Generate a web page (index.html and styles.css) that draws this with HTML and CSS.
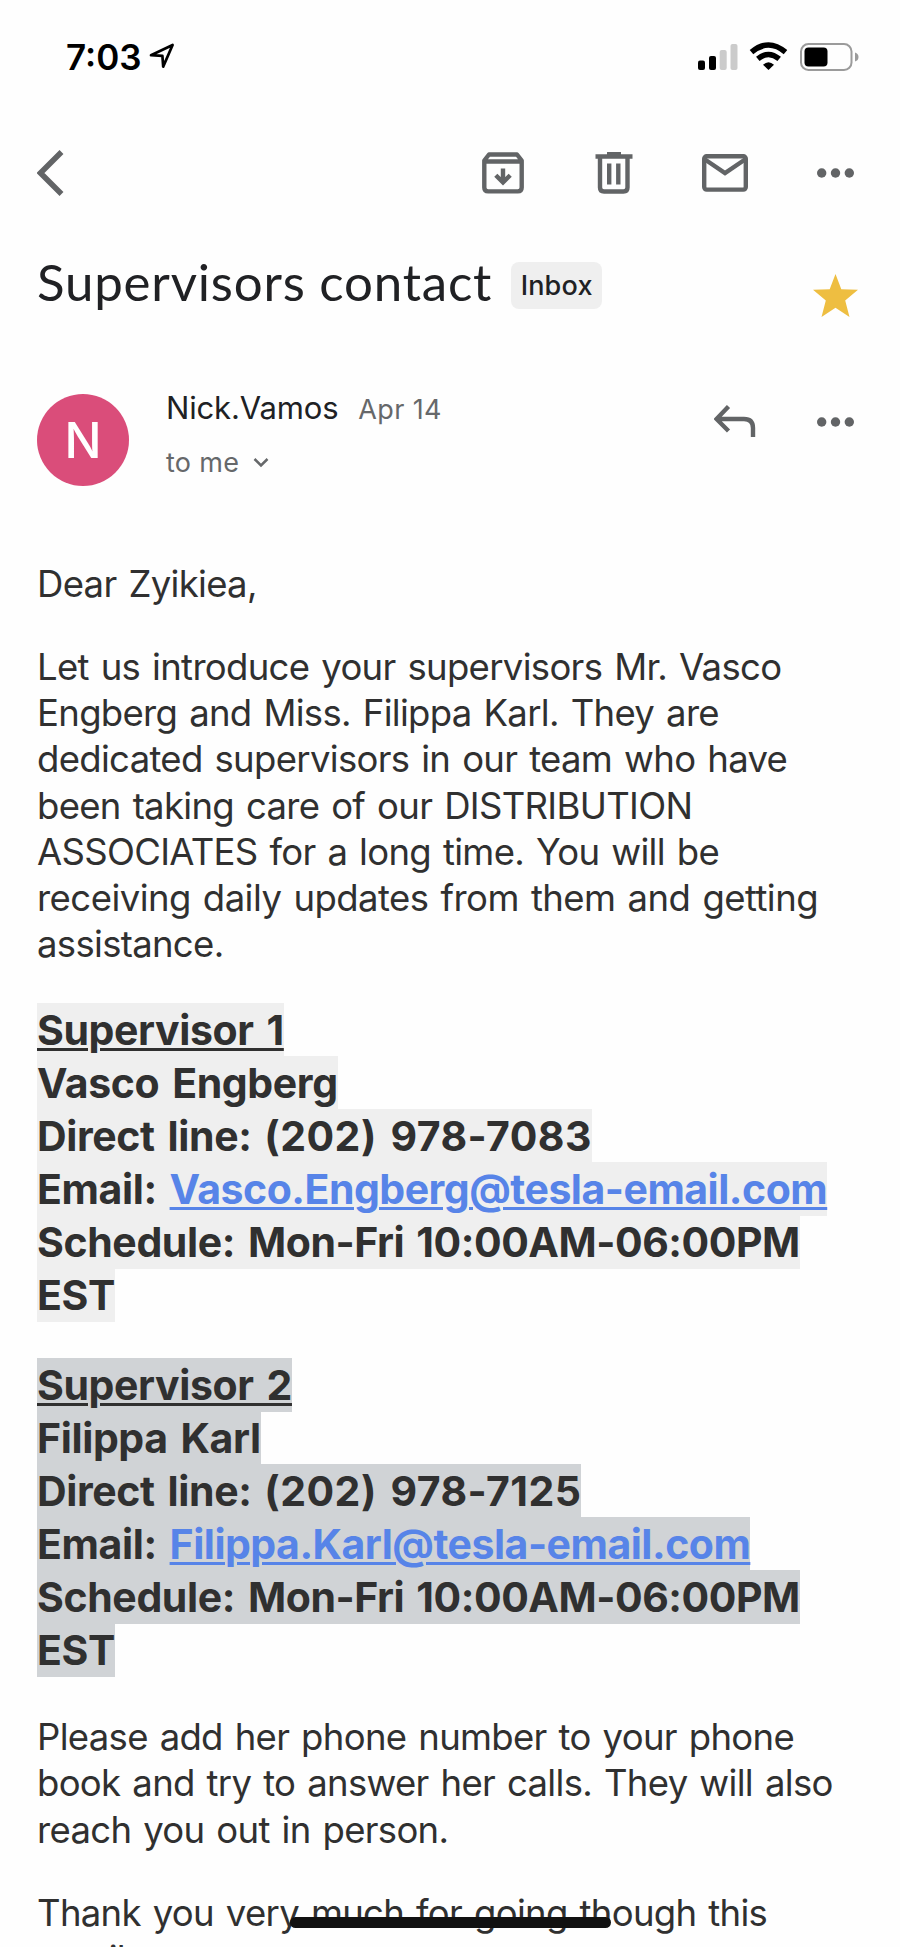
FILE: index.html
```html
<!DOCTYPE html>
<html lang="en">
<head>
<meta charset="utf-8">
<title>Supervisors contact</title>
<link rel="stylesheet" href="styles.css">
</head>
<body>
<main class="screen">
  <header class="status">
    <span class="clock">7:03</span>
    <svg class="location" width="26" height="26" viewBox="0 0 26 26"><path d="M2 12.2 23.6 2 14.2 23.6 13.4 12.8Z" fill="none" stroke="#000" stroke-width="2.7" stroke-linejoin="round"/></svg>
    <svg class="indicators" width="164" height="32" viewBox="0 0 164 32">
      <rect x="1" y="20.500" width="7" height="9.500" rx="2"/><rect x="12" y="16" width="7" height="14" rx="2"/>
      <rect x="22.700" y="10" width="7" height="20" rx="2" fill="#cbcbcb"/><rect x="33.500" y="4" width="7" height="26" rx="2" fill="#cbcbcb"/>
      <g fill="none" stroke="#000" stroke-width="5.500"><path d="M54.500 12.200Q71.500 -2.200 88.500 12.200"/><path d="M60.800 18.900Q71.500 10.100 82.200 18.900"/></g>
      <path d="M66 24.800Q71.500 19.600 77 24.800L71.500 30Z"/>
      <rect x="104" y="4" width="50.500" height="26" rx="7.500" fill="none" stroke="#9b9b9b" stroke-width="2"/>
      <rect x="107.500" y="7.500" width="23" height="19" rx="4"/>
      <path d="M158 12.500Q161.500 13.500 161.500 17T158 21.500Z" fill="#9b9b9b"/>
    </svg>
  </header>

  <nav class="toolbar">
    <svg width="27" height="46" viewBox="0 0 27 46"><path d="M24.500 2 3.500 23 24.500 44" fill="none" stroke="#626466" stroke-width="5.500"/></svg>
    <div class="actions">
      <svg width="42" height="42" viewBox="0 0 42 42"><path d="M2.300 8.500 7 2.500H35L39.700 8.500V35.500Q39.700 39.400 35.800 39.400H6.200Q2.300 39.400 2.300 35.500ZM2.300 9.500H39.700" fill="none" stroke="#626466" stroke-width="4.400" stroke-linejoin="round"/><path d="M21 16.500V30M13.800 23.200 21 30.400 28.200 23.200" fill="none" stroke="#626466" stroke-width="4.400"/></svg>
      <svg width="38" height="42" viewBox="0 0 38 42"><path d="M0.500 4.500H37.500M12 2.200H26M5 5V35.500Q5 39.500 9 39.500H28.500Q32.500 39.500 32.500 35.500V5M14.200 11.500V32.500M23.300 11.500V32.500" fill="none" stroke="#626466" stroke-width="4.400"/></svg>
      <svg width="46" height="38" viewBox="0 0 46 38"><rect x="2.200" y="2.200" width="41.600" height="33.400" rx="2.500" fill="none" stroke="#626466" stroke-width="4.400"/><path d="M3 5.500 23 19 43 5.500" fill="none" stroke="#626466" stroke-width="4.400"/></svg>
      <svg width="37" height="10" viewBox="0 0 37 10" fill="#626466"><circle cx="4.700" cy="5" r="4.700"/><circle cx="18.500" cy="5" r="4.700"/><circle cx="32.300" cy="5" r="4.700"/></svg>
    </div>
  </nav>

  <section class="subject">
    <h1 class="title">Supervisors contact</h1>
    <span class="tag">Inbox</span>
    <svg class="star" width="45" height="43" viewBox="0 0 45 43"><path d="M22.500 0 28.300 15.300 45 15.800 32.200 26.400 36.500 43 22.500 33.800 8.500 43 12.800 26.400 0 15.800 16.700 15.300Z" fill="#eebe41"/></svg>
  </section>

  <section class="sender">
    <div class="avatar">N</div>
    <div class="who">
      <div class="from"><span class="name">Nick.Vamos</span><span class="date">Apr 14</span></div>
      <div class="to"><span>to me</span><svg width="16" height="12" viewBox="0 0 16 12"><path d="M1.500 2 8 8.500 14.500 2" fill="none" stroke="#66686a" stroke-width="2.500"/></svg></div>
    </div>
    <div class="reply">
      <svg width="42" height="33" viewBox="0 0 42 33"><path d="M14.500 1.500 2.500 14 14.500 26M3 14H30Q39 14 39 23V32" fill="none" stroke="#626466" stroke-width="4.400"/></svg>
      <svg width="37" height="10" viewBox="0 0 37 10" fill="#626466"><circle cx="4.700" cy="5" r="4.700"/><circle cx="18.500" cy="5" r="4.700"/><circle cx="32.300" cy="5" r="4.700"/></svg>
    </div>
  </section>

  <article class="message">
    <p class="text">Dear Zyikiea,</p>
    <p class="text">Let us introduce your supervisors Mr. Vasco<br>Engberg and Miss. Filippa Karl. They are<br>dedicated supervisors in our team who have<br>been taking care of our DISTRIBUTION<br>ASSOCIATES for a long time. You will be<br><span class="loose">receiving daily updates from them and getting</span><br>assistance.</p>
    <p class="contact"><span class="mark light"><u>Supervisor 1</u><br>Vasco Engberg<br>Direct line: <span class="phone">(202) 978-7083</span><br>Email: <a class="link">Vasco.Engberg@tesla-email.com</a><br>Schedule: <span class="hours">Mon-Fri 10:00AM-06:00PM</span><br>EST</span></p>
    <p class="contact"><span class="mark dark"><u>Supervisor 2</u><br>Filippa Karl<br>Direct line: <span class="phone">(202) 978-7125</span><br>Email: <a class="link">Filippa.Karl@tesla-email.com</a><br>Schedule: <span class="hours">Mon-Fri 10:00AM-06:00PM</span><br>EST</span></p>
    <p class="text">Please add her phone number to your phone<br>book and try to answer her calls. They will also<br>reach you out in person.</p>
    <p class="text">Thank you very much for going though this<br>email.</p>
  </article>
  <div class="home-bar"></div>
</main>
</body>
</html>
```
FILE: styles.css
```css
* { box-sizing: border-box; }
body { margin: 0; background: #fefefe; }
svg { display: block; flex: none; }
.screen {
  position: relative; width: 900px; height: 1947px; overflow: hidden;
  background: #fefefe; color: #303030;
  font-family: Inter, "Liberation Sans", sans-serif;
}
.status { display: flex; align-items: flex-start; height: 150px; padding: 40px 39px 0 66px; }
.clock { margin-top: -1px; font-size: 35px; line-height: 36px; font-weight: 600; color: #000; }
.location { margin: 3px 0 0 7px; }
.indicators { margin-left: auto; }
.toolbar { display: flex; align-items: center; justify-content: space-between; height: 46px; padding: 0 46px 0 37px; }
.actions { display: flex; align-items: center; }
.actions svg:nth-child(2) { margin-left: 71px; }
.actions svg:nth-child(3) { margin-left: 69px; }
.actions svg:nth-child(4) { margin-left: 69px; }
.subject { display: flex; align-items: flex-start; height: 198px; padding: 58px 42px 0 37px; }
.title { margin: 0; font: 400 51px/56px Lato, sans-serif; letter-spacing: .8px; color: #202124; white-space: nowrap; }
.tag { margin: 8px 0 0 19px; width: 91px; height: 47px; border-radius: 8px; background: #efefef; color: #202124; font-size: 27px; font-weight: 500; letter-spacing: .2px; line-height: 47px; text-align: center; }
.star { margin: 20px 0 0 auto; }
.sender { display: flex; align-items: flex-start; height: 164px; padding: 0 46px 0 37px; }
.avatar { width: 92px; height: 92px; border-radius: 50%; background: #da4d7a; color: #fff; font-size: 49px; font-weight: 450; line-height: 94px; text-align: center; }
.who { margin-left: 37px; }
.from { display: flex; align-items: baseline; gap: 20px; line-height: 36px; margin-top: -4px; }
.name { font-size: 31px; letter-spacing: -.15px; color: #202124; }
.date { font-size: 27px; letter-spacing: .35px; color: #66686a; }
.to { display: flex; align-items: center; gap: 14px; margin-top: 17px; font-size: 27px; letter-spacing: .3px; line-height: 36px; color: #66686a; }
.reply { display: flex; align-items: center; gap: 61px; margin: 11px 0 0 auto; }
.message { padding: 3px 37px 0; white-space: nowrap; }
.text { margin: 0 0 37px; font-size: 36.500px; line-height: 46.150px; letter-spacing: -.68px; word-spacing: 2.300px; }
.loose { letter-spacing: -.54px; }
.contact { margin: 0; font-size: 41px; line-height: 53px; font-weight: 700; letter-spacing: -.38px; word-spacing: 3.500px; }
.phone { letter-spacing: .45px; }
.hours { letter-spacing: -.45px; word-spacing: 2.800px; }
.mark { padding: 2px 0 1.500px; }
.light { background: #efefef; }
.dark { background: #d0d3d6; }
.contact u, .link { text-decoration: underline; text-decoration-thickness: 2.600px; text-underline-offset: 3px; }
.link { color: #5784e8; letter-spacing: -.5px; }
.contact + .contact { margin-top: 37px; margin-bottom: 37px; }
.home-bar { position: absolute; left: 290px; bottom: 19px; width: 321px; height: 11px; border-radius: 6px; background: #111; }
```
